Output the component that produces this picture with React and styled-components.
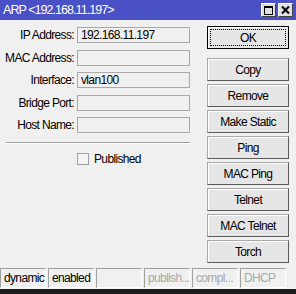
import React from "react";
import styled, { createGlobalStyle } from "styled-components";

const GlobalStyle = createGlobalStyle`
  html, body {
    margin: 0;
    padding: 0;
    background: #f0f0f0;
  }
  * {
    box-sizing: border-box;
  }
`;

const Window = styled.div`
  width: 296px;
  height: 294px;
  display: flex;
  flex-direction: column;
  background: #f0f0f0;
  font-family: "Liberation Sans", Arial, sans-serif;
  font-size: 12px;
  letter-spacing: -0.65px;
  color: #000;
  overflow: hidden;
`;

const TitleBar = styled.div`
  height: 20px;
  flex: none;
  display: flex;
  align-items: center;
  justify-content: space-between;
  padding: 0 3px 0 3px;
  background: #4a50c6;
  color: #fff;
  font-size: 12.5px;
  letter-spacing: -0.95px;
`;

const TitleButtons = styled.div`
  display: flex;
  gap: 2px;
`;

const TitleButton = styled.div`
  width: 15px;
  height: 14px;
  display: flex;
  align-items: center;
  justify-content: center;
  background: #e0e0e0;
  border: 1px solid;
  border-color: #fff #404040 #404040 #fff;
`;

const Body = styled.div`
  flex: 1;
  display: flex;
  gap: 17px;
  padding-top: 6px;
`;

const LeftPanel = styled.div`
  width: 190px;
  display: flex;
  flex-direction: column;
`;

const FormGrid = styled.div`
  display: grid;
  grid-template-columns: 74px 113px;
  column-gap: 3px;
  row-gap: 6.5px;
  margin-top: 1px;
`;

const Label = styled.div`
  height: 16px;
  line-height: 16px;
  text-align: right;
  color: #000;
`;

const Field = styled.div`
  height: 16px;
  line-height: 14px;
  padding-left: 3px;
  border: 1px solid #a9a9a9;
  background: #f0f0f0;
  white-space: nowrap;
  overflow: hidden;
`;

const Separator = styled.div`
  margin: 9px 0 0 6px;
  height: 2px;
  border-top: 1px solid #a0a0a0;
  border-bottom: 1px solid #fff;
`;

const CheckRow = styled.label`
  display: flex;
  align-items: center;
  gap: 5px;
  margin: 8px 0 0 77px;
`;

const CheckBox = styled.span`
  width: 12px;
  height: 12px;
  border: 1px solid #a0a0a0;
  background: #f4f4f4;
`;

const ButtonColumn = styled.div`
  width: 82px;
  display: flex;
  flex-direction: column;
  gap: 3px;
`;

const Button = styled.div`
  height: 23px;
  display: flex;
  align-items: center;
  justify-content: center;
  background: #e6e6e6;
  border: 1px solid;
  border-color: #a8a8a8 #5a5a5a #5a5a5a #a8a8a8;
  box-shadow: inset 1px 1px 0 #fff;
  position: relative;
  margin-bottom: ${(p) => (p.$default ? "6px" : "0")};
  ${(p) =>
    p.$default &&
    `
    border-color: #000;
    &::after {
      content: "";
      position: absolute;
      inset: 2px;
      border: 1px dotted #000;
    }
  `}
`;

const StatusBar = styled.div`
  flex: none;
  display: flex;
  gap: 2px;
  height: 20px;
  margin-bottom: 1px;
`;

const StatusCell = styled.div`
  width: 46px;
  height: 20px;
  line-height: 18px;
  padding-left: 3px;
  border: 1px solid;
  border-color: #a0a0a0 #fff #fff #a0a0a0;
  color: ${(p) => (p.$disabled ? "#a8a8a8" : "#000")};
  white-space: nowrap;
  overflow: hidden;
`;

const BottomEdge = styled.div`
  flex: none;
  height: 5px;
  background: #1c1c1c;
`;

const fields = [
  { label: "IP Address:", value: "192.168.11.197" },
  { label: "MAC Address:", value: "" },
  { label: "Interface:", value: "vlan100" },
  { label: "Bridge Port:", value: "" },
  { label: "Host Name:", value: "" },
];

const buttons = [
  "Copy",
  "Remove",
  "Make Static",
  "Ping",
  "MAC Ping",
  "Telnet",
  "MAC Telnet",
  "Torch",
];

const status = [
  { text: "dynamic" },
  { text: "enabled" },
  { text: "" },
  { text: "publish...", disabled: true },
  { text: "compl...", disabled: true },
  { text: "DHCP", disabled: true },
];

function App() {
  return (
    <Window>
      <GlobalStyle />
      <TitleBar>
        <span>ARP &lt;192.168.11.197&gt;</span>
        <TitleButtons>
          <TitleButton>
            <svg width="9" height="9" viewBox="0 0 9 9">
              <rect x="0.5" y="0.5" width="8" height="8" fill="none" stroke="#000" />
              <rect x="0" y="0" width="9" height="2" fill="#000" />
            </svg>
          </TitleButton>
          <TitleButton>
            <svg width="9" height="8" viewBox="0 0 9 8">
              <path d="M1 0.5 L8 7.5 M8 0.5 L1 7.5" stroke="#000" strokeWidth="2" />
            </svg>
          </TitleButton>
        </TitleButtons>
      </TitleBar>
      <Body>
        <LeftPanel>
          <FormGrid>
            {fields.map((f) => (
              <React.Fragment key={f.label}>
                <Label>{f.label}</Label>
                <Field>{f.value}</Field>
              </React.Fragment>
            ))}
          </FormGrid>
          <Separator />
          <CheckRow>
            <CheckBox />
            <span>Published</span>
          </CheckRow>
        </LeftPanel>
        <ButtonColumn>
          <Button $default>OK</Button>
          {buttons.map((b) => (
            <Button key={b}>{b}</Button>
          ))}
        </ButtonColumn>
      </Body>
      <StatusBar>
        {status.map((s, i) => (
          <StatusCell key={i} $disabled={s.disabled}>
            {s.text}
          </StatusCell>
        ))}
      </StatusBar>
      <BottomEdge />
    </Window>
  );
}

export default App;
